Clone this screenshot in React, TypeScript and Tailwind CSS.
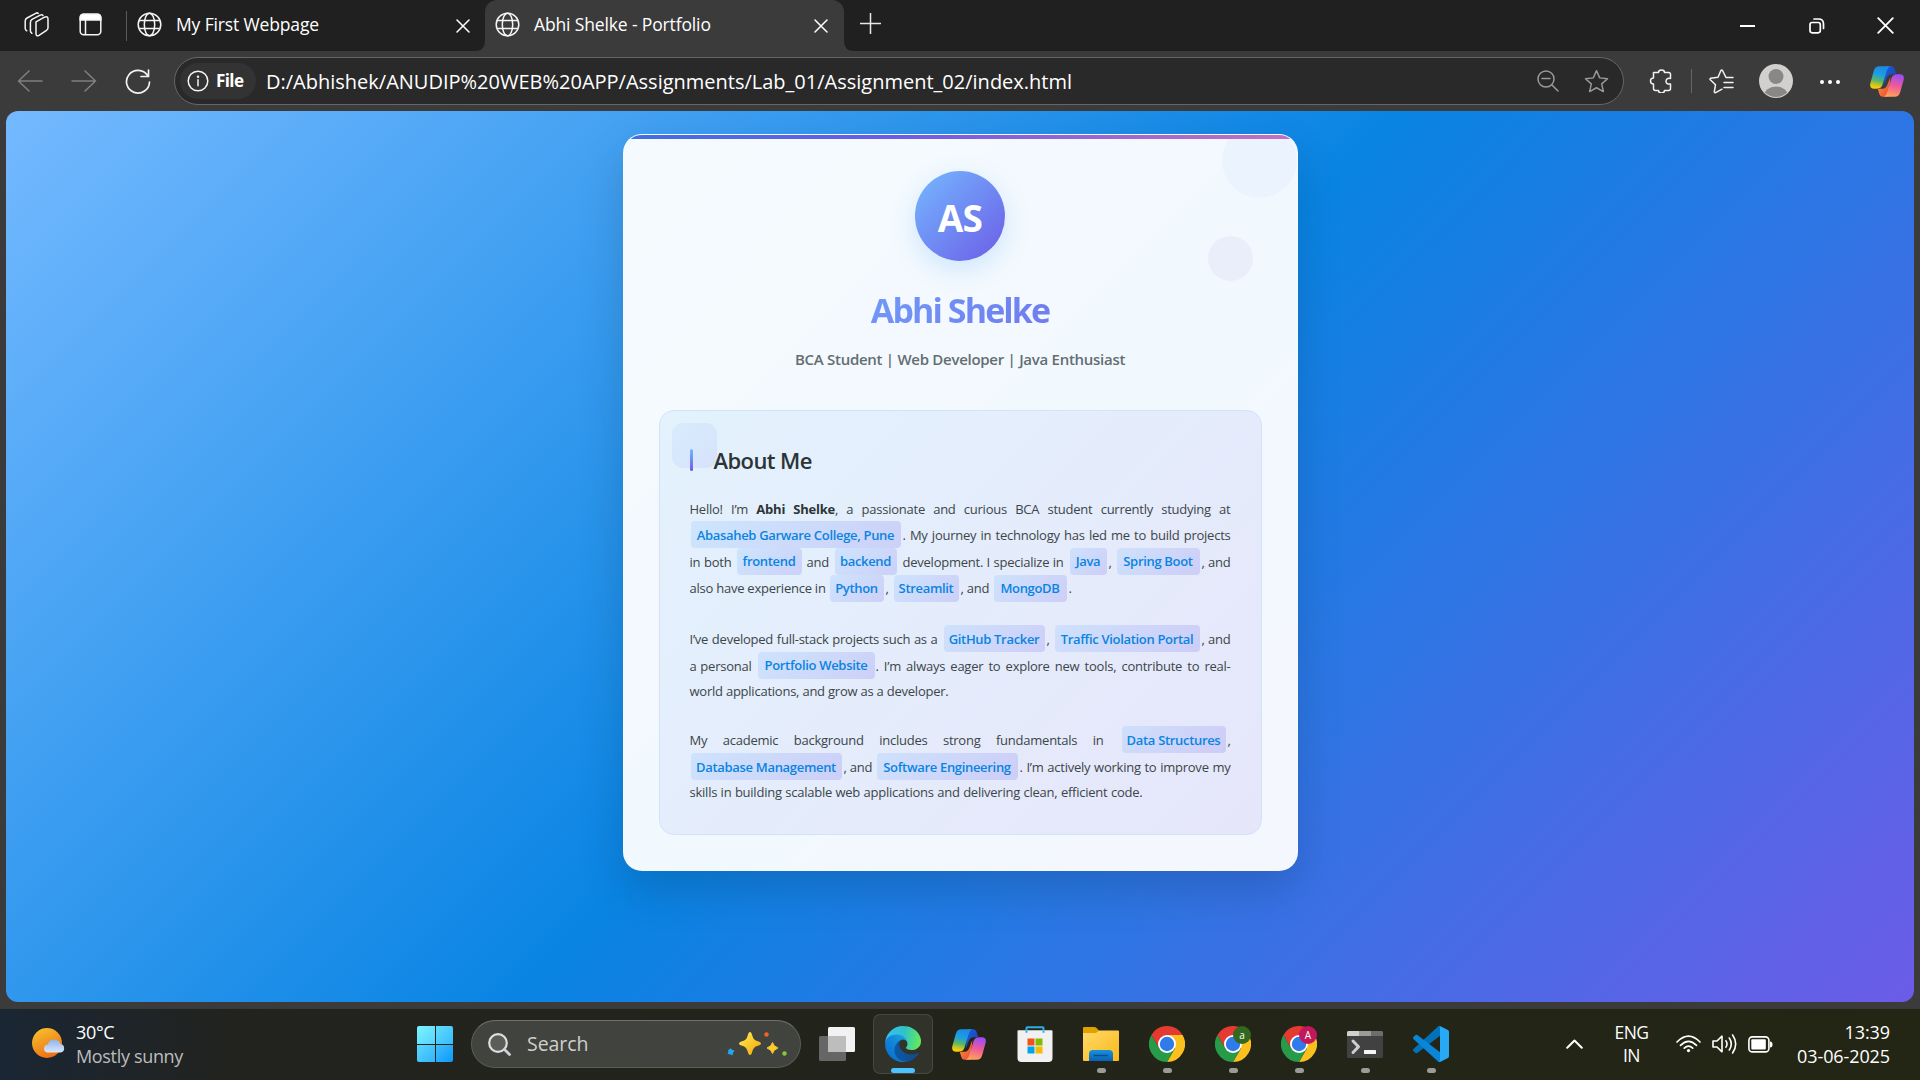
import type { ReactNode } from "react";

const Globe = () => (
  <svg className="size-[25px] shrink-0" viewBox="0 0 25 25" fill="none" stroke="#f5f5f5" strokeWidth="1.5">
    <circle cx="12.5" cy="12.5" r="11.3" />
    <ellipse cx="12.5" cy="12.5" rx="5.2" ry="11.3" />
    <path d="M2.2 8.5h20.6M2.2 16.5h20.6" />
  </svg>
);

const Close = ({ size }: { size: string }) => (
  <svg className={size} viewBox="0 0 14 14" stroke="#fff" strokeWidth="1.5" strokeLinecap="round">
    <path d="M1 1l12 12M13 1L1 13" />
  </svg>
);

const Copilot = ({ id, className }: { id: string; className: string }) => (
  <svg className={className} viewBox="0 0 100 90">
    <defs>
      <linearGradient id={`${id}-l`} x1="0.6" y1="0" x2="0.4" y2="1">
        <stop offset="0.1" stopColor="#1b8de6" />
        <stop offset="0.4" stopColor="#1fa0dd" />
        <stop offset="0.65" stopColor="#54b56c" />
        <stop offset="0.95" stopColor="#f8cc08" />
      </linearGradient>
      <linearGradient id={`${id}-r`} x1="0.6" y1="0" x2="0.4" y2="1">
        <stop offset="0.05" stopColor="#a24df0" />
        <stop offset="0.5" stopColor="#ee5a98" />
        <stop offset="1" stopColor="#ffa35a" />
      </linearGradient>
      <linearGradient id={`${id}-b`} x1="0" y1="0" x2="1" y2="1">
        <stop offset="0" stopColor="#1b5fe0" />
        <stop offset="1" stopColor="#1a3fae" />
      </linearGradient>
      <linearGradient id={`${id}-o`} x1="0" y1="0" x2="1" y2="1">
        <stop offset="0" stopColor="#ff9a48" />
        <stop offset="1" stopColor="#e8452c" />
      </linearGradient>
    </defs>
    <path d="M46 0h16c7 0 10 5 12 13l3 11H64c-9 0-13 5-16 14l-8 20z" fill={`url(#${id}-b)`} />
    <path d="M54 90H38c-7 0-10-5-12-13l-3-11h13c9 0 13-5 16-14l8-20z" fill={`url(#${id}-o)`} />
    <path d="M28 0h32c-6 2-9 8-12 18L37 54c-3 9-8 12-17 12h-8C2 66-1 60 1 50l10-36C14 4 19 0 28 0z" fill={`url(#${id}-l)`} />
    <path d="M72 90H40c6-2 9-8 12-18l11-36c3-9 8-12 17-12h8c10 0 13 6 11 16L89 76c-3 10-8 14-17 14z" fill={`url(#${id}-r)`} />
  </svg>
);

const Chrome = () => (
  <svg className="size-9" viewBox="0 0 48 48">
    <path d="M3.2 12A24 24 0 0 1 44.8 12H24L13.6 30z" fill="#e53a31" />
    <path d="M44.8 12A24 24 0 0 1 24 48L34.4 30 24 12z" fill="#fcc01e" />
    <path d="M24 48A24 24 0 0 1 3.2 12L13.6 30h20.8z" fill="#289b48" />
    <circle cx="24" cy="24" r="12" fill="#fff" />
    <circle cx="24" cy="24" r="9.6" fill="#2f7bea" />
  </svg>
);

const Edge = () => (
  <svg className="size-9" viewBox="0 0 256 256">
    <defs>
      <linearGradient id="edge-a" x1="63" y1="177" x2="242" y2="177" gradientUnits="userSpaceOnUse">
        <stop offset="0" stopColor="#0c59a4" />
        <stop offset="1" stopColor="#114a8b" />
      </linearGradient>
      <linearGradient id="edge-b" x1="157" y1="100" x2="46" y2="221" gradientUnits="userSpaceOnUse">
        <stop offset="0" stopColor="#1b9de2" />
        <stop offset="0.4" stopColor="#1389d8" />
        <stop offset="1" stopColor="#0a74d4" />
      </linearGradient>
      <linearGradient id="edge-c" x1="10" y1="60" x2="250" y2="110" gradientUnits="userSpaceOnUse">
        <stop offset="0" stopColor="#35c1f1" />
        <stop offset="0.5" stopColor="#2fc2c8" />
        <stop offset="1" stopColor="#66eb56" />
      </linearGradient>
    </defs>
    <path fill="url(#edge-a)" d="M235.68 190.39a93.73 93.73 0 0 1-10.54 4.71 101.87 101.87 0 0 1-35.9 6.46c-47.32 0-88.54-32.55-88.54-74.32A31.48 31.48 0 0 1 117.13 99.8c-42.8 1.8-53.8 46.4-53.8 72.53 0 73.88 68.09 81.37 82.76 81.37 7.91 0 19.84-2.3 27-4.56l1.31-.44A128.34 128.34 0 0 0 241 195.58a4 4 0 0 0-5.32-5.19z" />
    <path fill="url(#edge-b)" d="M105.73 241.42A79.2 79.2 0 0 1 83 220.08a80.72 80.72 0 0 1 29.5-120.6c3.12-1.47 8.45-4.13 15.54-4a32.35 32.35 0 0 1 25.69 13 31.88 31.88 0 0 1 6.36 18.66c0-.21 24.46-79.6-80-79.6-43.9 0-80 41.66-80 78.21a130.15 130.15 0 0 0 12.11 56 128 128 0 0 0 156.38 67.11 75.55 75.55 0 0 1-62.78-8z" />
    <path fill="url(#edge-c)" d="M152.33 148.86c-.81 1.05-3.3 2.5-3.3 5.66 0 2.61 1.7 5.12 4.72 7.23 14.38 10 41.49 8.68 41.56 8.68a59.56 59.56 0 0 0 30.27-8.35A61.38 61.38 0 0 0 256 109.22c.26-22.41-8-37.31-11.34-43.91C223.46 23.84 177.72 0 128 0A128 128 0 0 0 0 126.2c.48-36.54 36.8-66.05 80-66.05 3.5 0 23.46.34 42 10.07 16.34 8.58 24.9 18.94 30.85 29.21 6.18 10.67 7.28 24.15 7.28 29.52s-2.74 13.33-7.8 19.91z" />
  </svg>
);

const star = "M12 1.6l3.1 6.9 7.5.8-5.6 5 1.6 7.4L12 18l-6.6 3.7L7 14.3l-5.6-5 7.5-.8z";

function TabStrip() {
  return (
    <div className="flex h-[51px] items-start bg-[#202020] text-[17.5px] tracking-[-0.14px] text-white">
      <div className="flex h-[48px] w-[485px] items-center">
        <svg className="ml-[24px] size-[25px]" viewBox="0 0 25 25" fill="none" stroke="#f5f5f5" strokeWidth="1.5" strokeLinejoin="round" strokeLinecap="round">
          <path d="M12 9.8l8.5-4.6q3.5-1.6 3.5 2v8.5q0 1.700-1.500 2.600l-7.500 5q-3 1.500-3-1.500z" />
          <path d="M19 3.600q-.6-1.600-2.800-.5L8 7.400q-1.600 1-1.600 3V19q0 1.300 1.500 2.300" />
          <path d="M14.200 1.400q-.8-1-2.500-.1L3 6Q1.200 7 1.200 9v7.500q0 1.300 1.500 2.300" />
        </svg>
        <svg className="ml-[30px] size-[23px]" viewBox="0 0 23 23" fill="none" stroke="#f5f5f5" strokeWidth="1.5">
          <rect x="1.2" y="1.2" width="20.6" height="20.6" rx="3.5" />
          <path d="M1.2 7V4.7Q1.2 1.2 4.7 1.2h13.6q3.5 0 3.5 3.5V7z" fill="#fff" />
          <path d="M6.5 7v14.5" />
        </svg>
        <div className="mt-[3px] ml-[24px] h-[30px] w-px bg-[#5a5a5a]" />
        <div className="ml-[10px] flex items-center">
          <Globe />
          <span className="ml-[14px] w-[280px] whitespace-nowrap">My First Webpage</span>
          <Close size="mt-[3px] size-[14px]" />
        </div>
      </div>
      <div className="relative flex h-[51px] w-[359px] items-center rounded-t-[12px] bg-[#3b3b3b] pb-[3px] pl-[10px]">
        <svg className="absolute bottom-0 -left-[10px] size-[10px]" viewBox="0 0 10 10">
          <path d="M10 0v10H0Q10 10 10 0z" fill="#3b3b3b" />
        </svg>
        <svg className="absolute -right-[10px] bottom-0 size-[10px]" viewBox="0 0 10 10">
          <path d="M0 0v10h10Q0 10 0 0z" fill="#3b3b3b" />
        </svg>
        <Globe />
        <span className="ml-[14px] w-[280px] whitespace-nowrap">Abhi Shelke - Portfolio</span>
        <Close size="mt-[3px] size-[14px]" />
      </div>
      <svg className="mt-[13px] ml-[16px] size-[21px]" viewBox="0 0 21 21" stroke="#e8e8e8" strokeWidth="1.5">
        <path d="M10.5 0v21M0 10.5h21" />
      </svg>
      <div className="mt-[17px] mr-[26px] ml-auto flex items-center">
        <svg className="h-[16px] w-[15px]" viewBox="0 0 15 16" stroke="#fff" strokeWidth="2">
          <path d="M0 8h15" />
        </svg>
        <svg className="ml-[54px] h-[17px] w-[16px]" viewBox="0 0 16 17" fill="none" stroke="#fff" strokeWidth="1.7">
          <rect x="1" y="5.5" width="10.3" height="10.3" rx="2.2" />
          <path d="M5 2h4.500Q14.500 2 14.500 7v4.500" strokeLinecap="round" />
        </svg>
        <Close size="ml-[52px] size-[17px]" />
      </div>
    </div>
  );
}

function Toolbar() {
  return (
    <div className="flex h-[60px] items-center bg-[#3b3b3b]">
      <svg className="ml-[17px] h-[22px] w-[26px]" viewBox="0 0 26 22" fill="none" stroke="#808080" strokeWidth="1.5" strokeLinecap="round" strokeLinejoin="round">
        <path d="M25 11H1.500M12 1L1.500 11 12 21" />
      </svg>
      <svg className="ml-[28px] h-[22px] w-[26px]" viewBox="0 0 26 22" fill="none" stroke="#808080" strokeWidth="1.5" strokeLinecap="round" strokeLinejoin="round">
        <path d="M1 11h23.500M14 1l10.500 10L14 21" />
      </svg>
      <svg className="ml-[28px] h-[25px] w-[26px]" viewBox="0 0 26 25" fill="none" stroke="#f2f2f2" strokeWidth="1.7" strokeLinecap="round" strokeLinejoin="round">
        <path d="M24.500 13A11.500 11.300 0 1 1 22.600 6.500M23.500 1v6.500h-7.500" />
      </svg>
      <div className="ml-[23px] flex h-[48px] w-[1450px] items-center rounded-full border border-[#666] bg-[#292929] pl-[5px] text-white">
        <div className="flex h-[36px] w-[76px] items-center rounded-full bg-[#333] pl-[7px]">
          <svg className="size-[22px]" viewBox="0 0 22 22" fill="none" stroke="#f5f5f5" strokeWidth="1.5">
            <circle cx="11" cy="11" r="9.8" />
            <path d="M11 9.800v6" strokeLinecap="round" />
            <circle cx="11" cy="6.8" r="0.5" fill="#fff" />
          </svg>
          <span className="ml-[7px] text-[17px] font-bold tracking-[-0.6px]">File</span>
        </div>
        <span className="ml-[10px] pt-[2px] text-[20px] leading-none whitespace-nowrap">
          D:/Abhishek/ANUDIP%20WEB%20APP/Assignments/Lab_01/Assignment_02/index.html
        </span>
        <svg className="mr-[25px] ml-auto size-[22px]" viewBox="0 0 22 22" fill="none" stroke="#999" strokeWidth="1.5" strokeLinecap="round">
          <circle cx="9" cy="9" r="8" />
          <path d="M15 15l6 6M5 8.500h8" />
        </svg>
        <svg className="mr-[14px] size-[25px]" viewBox="0 0 24 24" fill="none" stroke="#999" strokeWidth="1.4" strokeLinejoin="round">
          <path d={star} />
        </svg>
      </div>
      <svg className="ml-[25px] size-[24px]" viewBox="0 0 24 24" fill="none" stroke="#f2f2f2" strokeWidth="1.5" strokeLinejoin="round">
        <path d="M4.500 3.500h5Q9.500 1 12.500 1t3 2.500h4q2 0 2 2v4q-4.500-.8-4.500 2.700t4.500 2.800v4.500q0 2-2 2h-4q0 2.500-3 2.500t-3-2.500h-3q-2 0-2-2V15Q1.500 15 1.500 12t3-3z" />
      </svg>
      <div className="ml-[18px] h-[24px] w-px bg-[#666]" />
      <svg className="ml-[17px] size-[25px]" viewBox="0 0 25 25" fill="none" stroke="#f2f2f2" strokeWidth="1.5" strokeLinecap="round" strokeLinejoin="round">
        <path d="M24 8.500h-7L13.500 1.500q-.8-1-1.600 0L9 8.200l-7.300 1q-1.200.5-.4 1.500l5.200 5-1.200 7.200q.2 1.200 1.400.7l6.300-3.400M15 13.500h9M15 18.500h9" />
      </svg>
      <svg className="ml-[25px] size-[34px]" viewBox="0 0 34 34">
        <clipPath id="avatar-clip">
          <circle cx="17" cy="17" r="16" />
        </clipPath>
        <circle cx="17" cy="17" r="17" fill="#d2d0ce" />
        <g clipPath="url(#avatar-clip)" fill="#8a8886">
          <circle cx="17" cy="12.5" r="7.5" />
          <ellipse cx="17" cy="32" rx="12" ry="9.5" />
        </g>
      </svg>
      <div className="ml-[27px] flex gap-[4px] pt-[1px]">
        <i className="size-[4px] rounded-full bg-white" />
        <i className="size-[4px] rounded-full bg-white" />
        <i className="size-[4px] rounded-full bg-white" />
      </div>
      <Copilot id="cp-top" className="ml-[30px] h-[31px] w-[34px]" />
    </div>
  );
}

const Row = ({ h, children }: { h: string; children: ReactNode }) => <div className={`flex items-center ${h}`}>{children}</div>;

const Txt = ({ className, children }: { className: string; children: ReactNode }) => (
  <span className={`shrink-0 whitespace-nowrap text-justify [text-align-last:justify] ${className}`}>{children}</span>
);

const Tag = ({ className, pad = "pt-px", children }: { className: string; pad?: string; children: ReactNode }) => (
  <span
    className={`flex h-[27px] shrink-0 items-center justify-center rounded-[4px] bg-linear-135/srgb from-[#74b9ff]/20 to-[#6c5ce7]/20 font-semibold tracking-[-0.32px] whitespace-nowrap text-[#0984e3] ${pad} ${className}`}
  >
    {children}
  </span>
);

function Card() {
  return (
    <div className="relative h-[737px] w-[675px] overflow-hidden rounded-[19px] border border-white/20 bg-white/95 px-[35px] pt-[36px] shadow-[0_19px_45px_rgba(0,0,0,0.15)]">
      <div className="absolute -top-[12px] right-0 size-[75px] rounded-full bg-[#ebf4fe]" />
      <div className="absolute top-[101px] right-[44px] size-[45px] rounded-full bg-[#eaeefb]" />
      <div className="absolute inset-x-0 top-0 h-[4px] bg-linear-to-r/srgb from-[#3f70e4] via-[#6c5ce7] via-40% to-[#c570c0]" />
      <div className="mx-auto flex size-[90px] items-center justify-center rounded-full bg-linear-135/srgb from-[#74b9ff] to-[#6c5ce7] pt-[3px] text-[37px] font-bold tracking-[-0.8px] text-white shadow-[0_8px_24px_rgba(116,185,255,0.3)]">
        AS
      </div>
      <h1 className="mt-[27px] h-[45px] bg-linear-135/srgb from-[#74b9ff] to-[#6c5ce7] bg-clip-text text-center text-[34px] leading-[45px] font-bold tracking-[-1.9px] text-transparent">
        Abhi Shelke
      </h1>
      <p className="mt-[14px] h-[24px] text-center text-[15px] leading-[24px] font-semibold tracking-[-0.28px] text-[#636e72]">
        BCA Student | Web Developer | Java Enthusiast
      </p>
      <section className="relative mt-[39px] h-[425px] rounded-[15px] border border-[#cfe3ff] bg-linear-135/srgb from-[#e3f2fd] to-[#e6e6fa] pt-[34px] pl-[30px] text-[13px] tracking-[-0.24px] text-[#3c4548]">
        <div className="absolute top-[12px] left-[12px] size-[45px] rounded-[11px] bg-linear-135/srgb from-[#74b9ff]/10 to-[#6c5ce7]/10" />
        <h2 className="relative flex h-[30px] items-center text-[22px] font-semibold tracking-[-0.58px] text-[#2d3436]">
          <span className="mr-[21px] h-[22px] w-[3px] rounded-full bg-linear-to-b/srgb from-[#74b9ff] to-[#6c5ce7]" />
          About Me
        </h2>
        <div className="mt-[21px]">
          <Row h="h-[25px]">
            <Txt className="w-[541px] pt-[2px]">
              Hello! I’m <b className="font-bold text-[#2d3436]">Abhi Shelke</b>, a passionate and curious BCA student currently studying at
            </Txt>
          </Row>
          <Row h="h-[27px]">
            <Tag pad="pt-[2px]" className="ml-[1px] w-[210px]">Abasaheb Garware College, Pune</Tag>
            <Txt className="ml-[2px] w-[328px] pt-[2px]">. My journey in technology has led me to build projects</Txt>
          </Row>
          <Row h="h-[27px]">
            <Txt className="w-[42px] pt-[2px]">in both</Txt>
            <Tag className="ml-[5px] w-[65px]">frontend</Tag>
            <Txt className="ml-[5px] w-[22px] pt-[2px]">and</Txt>
            <Tag className="ml-[6px] w-[62px]">backend</Tag>
            <Txt className="ml-[6px] w-[161px] pt-[2px]">development. I specialize in</Txt>
            <Tag className="ml-[6px] w-[37px]">Java</Tag>
            <Txt className="ml-[2px] w-[8px] pt-[2px]">,</Txt>
            <Tag className="w-[83px]">Spring Boot</Tag>
            <Txt className="ml-[2px] w-[29px] pt-[2px]">, and</Txt>
          </Row>
          <Row h="h-[26px]">
            <Txt className="w-[134px] pt-[2px]">also have experience in</Txt>
            <Tag className="ml-[6px] w-[54px]">Python</Tag>
            <Txt className="ml-[2px] w-[8px] pt-[2px]">,</Txt>
            <Tag className="w-[65px]">Streamlit</Tag>
            <Txt className="ml-[2px] w-[28px] pt-[2px]">, and</Txt>
            <Tag className="ml-[5px] w-[73px]">MongoDB</Tag>
            <Txt className="ml-[2px] w-[8px] pt-[2px]">.</Txt>
          </Row>
        </div>
        <div className="mt-[24px]">
          <Row h="h-[27px]">
            <Txt className="w-[248px] pt-[2px]">I’ve developed full-stack projects such as a</Txt>
            <Tag pad="pt-[2px]" className="ml-[6px] w-[101px]">GitHub Tracker</Tag>
            <Txt className="ml-[2px] w-[8px] pt-[2px]">,</Txt>
            <Tag pad="pt-[2px]" className="w-[145px]">Traffic Violation Portal</Tag>
            <Txt className="ml-[2px] w-[29px] pt-[2px]">, and</Txt>
          </Row>
          <Row h="h-[27px]">
            <Txt className="w-[62px] pt-[2px]">a personal</Txt>
            <Tag className="ml-[6px] w-[117px]">Portfolio Website</Tag>
            <Txt className="ml-[1px] w-[355px] pt-[2px]">. I’m always eager to explore new tools, contribute to real-</Txt>
          </Row>
          <Row h="h-[25px]">
            <Txt className="w-[259px]">world applications, and grow as a developer.</Txt>
          </Row>
        </div>
        <div className="mt-[22px]">
          <Row h="h-[27px]">
            <Txt className="w-[414px] pt-[2px]">My academic background includes strong fundamentals in</Txt>
            <Tag pad="pt-[2px]" className="ml-[18px] w-[104px]">Data Structures</Tag>
            <Txt className="ml-[2px] w-[4px] pt-[2px]">,</Txt>
          </Row>
          <Row h="h-[27px]">
            <Tag pad="pt-[2px]" className="ml-[1px] w-[151px]">Database Management</Tag>
            <Txt className="ml-[2px] w-[28px] pt-[2px]">, and</Txt>
            <Tag pad="pt-[2px]" className="ml-[5px] w-[141px]">Software Engineering</Tag>
            <Txt className="ml-[2px] w-[211px] pt-[2px]">. I’m actively working to improve my</Txt>
          </Row>
          <Row h="h-[25px]">
            <Txt className="w-[453px]">skills in building scalable web applications and delivering clean, efficient code.</Txt>
          </Row>
        </div>
      </section>
    </div>
  );
}

const TaskbarApp = ({ children, running, active }: { children: ReactNode; running?: boolean; active?: boolean }) => (
  <div
    className={`relative flex size-[60px] items-center justify-center rounded-[7px] border ${
      active ? "border-white/10 bg-white/7" : "border-transparent"
    }`}
  >
    {children}
    {running && <span className="absolute bottom-0 h-[5px] w-[9px] rounded-full bg-[#9b9b97]" />}
    {active && <span className="absolute bottom-0 h-[5px] w-[24px] rounded-full bg-[#4cc2ff]" />}
  </div>
);

const Badge = ({ className, children }: { className: string; children: ReactNode }) => (
  <span className={`absolute top-[11px] right-[11px] flex size-[18px] items-center justify-center rounded-full text-[10px] text-white ${className}`}>
    {children}
  </span>
);

function Taskbar() {
  return (
    <div className="flex h-[72px] items-center border-t border-[#383a34] bg-linear-to-r/srgb from-[#1a2634] via-[#22231f] via-12% to-[#232614] pb-[1px] text-[18px] text-white">
      <svg className="ml-[31px] h-[32px] w-[35px]" viewBox="0 0 35 32">
        <defs>
          <linearGradient id="sun" x1="0.2" y1="0" x2="0.7" y2="1">
            <stop offset="0" stopColor="#f6c12c" />
            <stop offset="1" stopColor="#ef6a12" />
          </linearGradient>
          <linearGradient id="cloud" x1="0" y1="0" x2="0" y2="1">
            <stop offset="0" stopColor="#8fb2ea" />
            <stop offset="1" stopColor="#dbe8fc" />
          </linearGradient>
        </defs>
        <circle cx="16" cy="15" r="15" fill="url(#sun)" />
        <path d="M17 24.500a4 4 0 0 1 0-8q1-5 6-5t6.500 4.500a4.300 4.300 0 0 1 0 8.500z" fill="url(#cloud)" />
      </svg>
      <div className="ml-[10px] w-[341px] pb-[1px] leading-[24px] tracking-[-0.33px]">
        <div>30°C</div>
        <div className="text-[#bdbdbd]">Mostly sunny</div>
      </div>
      <div className="grid size-[36px] shrink-0 grid-cols-2 gap-[1px] overflow-hidden rounded-[2px]">
        <i className="bg-linear-135/srgb from-[#7cf3ff] to-[#55d4fc]" />
        <i className="bg-linear-135/srgb from-[#62dcfd] to-[#35bcfb]" />
        <i className="bg-linear-135/srgb from-[#5bd6fc] to-[#31b5fb]" />
        <i className="bg-linear-135/srgb from-[#40c0fb] to-[#0d98fb]" />
      </div>
      <div className="ml-[18px] flex h-[48px] w-[330px] items-center rounded-full border border-[#5a5c57] border-t-[#70716c] bg-[#41433e] pl-[15px]">
        <svg className="size-[25px]" viewBox="0 0 25 25" fill="none" strokeLinecap="round">
          <circle cx="11" cy="11" r="8.8" stroke="#dedede" strokeWidth="2.2" fill="#5b5d59" />
          <path d="M17.500 17.500l5 5" stroke="#d0d0d8" strokeWidth="2.8" />
        </svg>
        <span className="ml-[15px] text-[19.5px] tracking-[-0.05px] text-[#cfcfcd]">Search</span>
        <svg className="mr-[12px] ml-auto h-[26px] w-[62px]" viewBox="0 0 62 26">
          <defs>
            <linearGradient id="spark" x1="0" y1="0" x2="1" y2="1">
              <stop offset="0.2" stopColor="#ffdf4a" />
              <stop offset="1" stopColor="#f5a400" />
            </linearGradient>
          </defs>
          <path d="M24 1q1.500 0 2.300 3.500Q27.500 9 31 10q4 1 4 2.500T31 15q-3.500 1-4.700 5.500Q25.500 24 24 24t-2.300-3.500Q20.500 16 17 15q-4-1-4-2.500T17 10q3.500-1 4.700-5.500Q22.500 1 24 1z" fill="url(#spark)" />
          <path d="M46.500 11.500q.8 3.800 5.500 5.500-4.700 1.700-5.500 5.500-.8-3.800-5.500-5.500 4.700-1.700 5.500-5.500z" fill="#fdc92e" stroke="#fdc92e" />
          <path d="M4.500 17q1.300 2.200 4 2.700-1.800 1.700-2 4.800-1.700-1.700-5-1.500 1.500-1.700.500-4.300 2.200.3 2.500-1.700z" fill="#22a7f0" />
          <circle cx="40.5" cy="3.5" r="2.2" fill="#f0642a" />
          <circle cx="58.5" cy="22.5" r="2.2" fill="#8cc63f" />
        </svg>
      </div>
      <div className="ml-[6px] flex items-center gap-[6px]">
        <TaskbarApp>
          <svg className="h-[34px] w-[36px]" viewBox="0 0 36 34">
            <rect x="0" y="9" width="27" height="25" rx="1.5" fill="#666" />
            <rect x="9" y="0" width="27" height="25" rx="1.5" fill="#f2f2f2" />
            <rect x="9" y="9" width="18" height="16" rx="1" fill="#bdbdbd" />
          </svg>
        </TaskbarApp>
        <TaskbarApp active>
          <Edge />
        </TaskbarApp>
        <TaskbarApp>
          <Copilot id="cp-task" className="h-[31px] w-[34px]" />
        </TaskbarApp>
        <TaskbarApp>
          <svg className="size-[36px]" viewBox="0 0 36 36">
            <path d="M9.500 6.500V2q0-.8.800-.8h15.400q.8 0 .8.800v4.500" fill="none" stroke="#2aaeea" strokeWidth="2" />
            <path d="M.5 5q0-.8.800-.8h33.400q.8 0 .8.800v27q0 4-4 4h-27q-4 0-4-4z" fill="#f1f1f1" />
            <path d="M8.500 4.200h2v2.500h-2zM25.500 4.200h2v2.500h-2z" fill="#2aaeea" />
            <path d="M10.500 12.500h7v7h-7z" fill="#f1511b" />
            <path d="M18.500 12.500h7v7h-7z" fill="#80bb03" />
            <path d="M10.500 20.500h7v7h-7z" fill="#00a3ee" />
            <path d="M18.500 20.500h7v7h-7z" fill="#fbb901" />
          </svg>
        </TaskbarApp>
        <TaskbarApp running>
          <svg className="h-[34px] w-[36px]" viewBox="0 0 36 34">
            <defs>
              <linearGradient id="folder" x1="0" y1="0" x2="1" y2="1">
                <stop offset="0" stopColor="#ffd968" />
                <stop offset="1" stopColor="#f9b91c" />
              </linearGradient>
              <linearGradient id="tray" x1="0" y1="0" x2="0" y2="1">
                <stop offset="0" stopColor="#1593dc" />
                <stop offset="1" stopColor="#0b62b4" />
              </linearGradient>
            </defs>
            <path d="M0 1q0-1 1-1h10.500q1 0 1.800.8L16 3.500V8H0z" fill="#e0a000" />
            <path d="M0 6h12q1.500 0 2.500-1.300L16 3.500h19q1 0 1 1V33q0 1-1 1H1q-1 0-1-1z" fill="url(#folder)" />
            <path d="M6 34V27q0-4 4-4h16q4 0 4 4v7z" fill="url(#tray)" />
            <path d="M10.500 28.500h14.500" stroke="#0a4c90" strokeWidth="1.5" />
          </svg>
        </TaskbarApp>
        <TaskbarApp running>
          <Chrome />
        </TaskbarApp>
        <TaskbarApp running>
          <Chrome />
          <Badge className="bg-[#33691e]">a</Badge>
        </TaskbarApp>
        <TaskbarApp running>
          <Chrome />
          <Badge className="bg-[#c2185b]">A</Badge>
        </TaskbarApp>
        <TaskbarApp running>
          <svg className="h-[27px] w-[36px]" viewBox="0 0 36 27">
            <rect width="36" height="27" rx="1.5" fill="#414141" />
            <path d="M1.500 0H12v5H0V1.500Q0 0 1.500 0z" fill="#cfcfcf" />
            <path d="M12 0h12v5H12z" fill="#9b9b9b" />
            <path d="M24 0h10.500Q36 0 36 1.500V5H24z" fill="#6d6d6d" />
            <path d="M6 10l5.500 5.700L6 21.500" fill="none" stroke="#cdcdcd" strokeWidth="3" strokeLinecap="round" strokeLinejoin="round" />
            <rect x="17" y="19" width="12" height="4" rx="0.5" fill="#f4f4f4" />
          </svg>
        </TaskbarApp>
        <TaskbarApp running>
          <svg className="size-[36px]" viewBox="0 0 100 100">
            <path fill="#0072ba" d="M96.46 10.8L75.86.88a6.23 6.23 0 0 0-7.11 1.21L1.3 63.58a4.17 4.17 0 0 0 0 6.16l5.51 5.01a4.17 4.17 0 0 0 5.32.24L93.36 13.3c2.73-2.07 6.64-.12 6.64 3.31v-.24a6.25 6.25 0 0 0-3.54-5.57z" />
            <path fill="#0a86d8" d="M96.46 89.2l-20.6 9.92a6.23 6.23 0 0 1-7.11-1.21L1.3 36.42a4.17 4.17 0 0 1 0-6.16l5.51-5.01a4.17 4.17 0 0 1 5.32-.24l81.23 61.69c2.73 2.07 6.64.12 6.64-3.31v.24a6.25 6.25 0 0 1-3.54 5.57z" />
            <path fill="#27a9f5" d="M75.86 99.13a6.23 6.23 0 0 1-7.11-1.21c2.31 2.31 6.25.67 6.25-2.59V4.67c0-3.26-3.94-4.9-6.25-2.59A6.23 6.23 0 0 1 75.86.87l20.6 9.91A6.25 6.25 0 0 1 100 16.41v67.17a6.25 6.25 0 0 1-3.54 5.63z" />
          </svg>
        </TaskbarApp>
      </div>
      <svg className="ml-auto h-[10px] w-[17px] shrink-0" viewBox="0 0 17 10" fill="none" stroke="#fff" strokeWidth="2" strokeLinecap="round" strokeLinejoin="round">
        <path d="M1.200 8.800l7.300-7.300 7.300 7.300" />
      </svg>
      <div className="ml-[31px] w-[35px] text-center text-[17.5px] leading-[23px] tracking-[-0.6px]">
        ENG
        <br />
        IN
      </div>
      <svg className="ml-[27px] h-[18px] w-[25px]" viewBox="0 0 25 18" fill="none" stroke="#fff" strokeWidth="1.7" strokeLinecap="round">
        <path d="M1 7q11.500-11.500 23 0M4.500 10.300q8-8 16 0M8.300 13.200q4.200-4.200 8.400 0" />
        <circle cx="12.5" cy="15.6" r="1.6" fill="#fff" stroke="none" />
      </svg>
      <svg className="ml-[11px] h-[22px] w-[25px]" viewBox="0 0 25 22" fill="none" stroke="#fff" strokeWidth="1.6" strokeLinecap="round" strokeLinejoin="round">
        <path d="M1 8h4l5-4.800v15.600L5 14H1zM14 7.800q2 3.200 0 6.400M17.300 5q4 6 0 12M20.600 2q6.200 9 0 18" />
      </svg>
      <svg className="ml-[11px] h-[17px] w-[25px]" viewBox="0 0 25 17">
        <rect x="0.9" y="0.9" width="20" height="15" rx="3.5" fill="none" stroke="#fff" strokeWidth="1.6" />
        <rect x="3.3" y="3.3" width="14.5" height="10.2" rx="1" fill="#fff" />
        <path d="M22 5.500q2.500 0 2.500 3t-2.500 3z" fill="#fff" />
      </svg>
      <div className="mr-[30px] ml-[24px] w-[93px] pb-[1px] text-right leading-[24px] tracking-[-0.1px] whitespace-nowrap">
        13:39
        <br />
        03-06-2025
      </div>
    </div>
  );
}

export default function App() {
  return (
    <div className="flex h-[1080px] w-[1920px] flex-col overflow-hidden bg-[#3b3b3b] font-['Open_Sans','Noto_Sans',sans-serif]">
      <TabStrip />
      <Toolbar />
      <main className="mx-[6px] mb-[6px] flex h-[891px] justify-center overflow-hidden rounded-[12px] bg-linear-135/srgb from-[#74b9ff] via-[#0984e3] to-[#6c5ce7] pt-[23px]">
        <Card />
      </main>
      <Taskbar />
    </div>
  );
}
